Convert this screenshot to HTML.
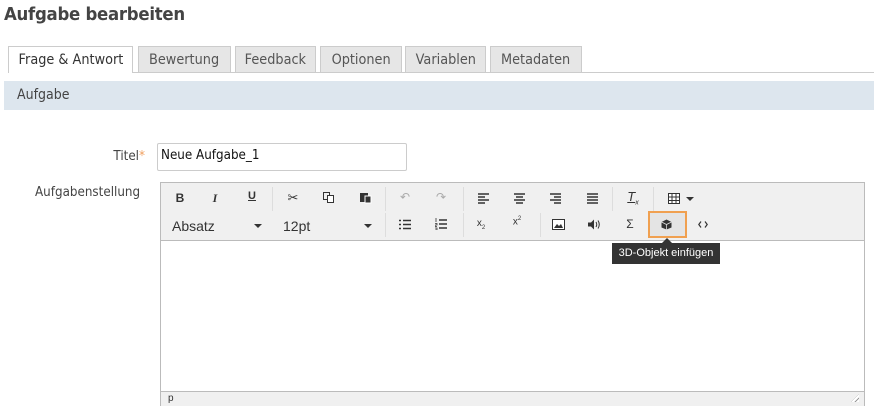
<!DOCTYPE html>
<html><head><meta charset="utf-8"><style>
body{margin:0;width:874px;height:416px;background:#fff;font-family:"DejaVu Sans","Liberation Sans",sans-serif;position:relative;overflow:hidden;color:#333}
.a{position:absolute}
h1{position:absolute;left:4px;top:4px;margin:0;font-size:18px;font-weight:bold;color:#444;font-family:"DejaVu Sans",sans-serif;letter-spacing:-0.3px;transform:scaleX(.92);transform-origin:left}
.tab{position:absolute;top:46px;height:26px;background:#e6e6e6;border:1px solid #ccc;border-bottom:none;font-size:14px;color:#555;text-align:center;line-height:26px;box-sizing:border-box}
.tab span{display:inline-block;transform:scaleX(.92)}
.ic{position:absolute;font-family:"Liberation Sans",sans-serif;color:#333;font-size:12px;transform:translate(-50%,0)}
.sep{position:absolute;width:1px;height:24px;background:#ddd}
svg.i{position:absolute}
</style></head><body>
<h1>Aufgabe bearbeiten</h1>
<div class="a" style="left:8px;top:72px;width:866px;height:1px;background:#ccc"></div>
<div class="tab" style="left:8px;width:125px;height:27px;background:#fff;color:#333"><span>Frage &amp; Antwort</span></div>
<div class="tab" style="left:138px;width:93px"><span>Bewertung</span></div>
<div class="tab" style="left:235px;width:81px"><span>Feedback</span></div>
<div class="tab" style="left:320px;width:82px"><span>Optionen</span></div>
<div class="tab" style="left:405px;width:81px"><span>Variablen</span></div>
<div class="tab" style="left:490px;width:92px"><span>Metadaten</span></div>
<div class="a" style="left:4px;top:81px;width:870px;height:29px;background:#dde6ee"></div>
<div class="a" style="left:17px;top:87px;font-size:14px;color:#444;transform:scaleX(.9);transform-origin:left">Aufgabe</div>
<div class="a" style="left:60px;top:149px;width:85px;text-align:right;font-size:13px;color:#444;transform:scaleX(.92);transform-origin:right">Titel<span style="color:#f0a060">*</span></div>
<div class="a" style="left:157px;top:143px;width:250px;height:28px;border:1px solid #ccc;border-radius:2px;box-sizing:border-box"></div>
<div class="a" style="left:161px;top:148px;font-size:13px;color:#111;transform:scaleX(.92);transform-origin:left">Neue Aufgabe_1</div>
<div class="a" style="left:35px;top:185px;font-size:13px;color:#444;transform:scaleX(.92);transform-origin:left">Aufgabenstellung</div>
<div class="a" style="left:160px;top:182px;width:705px;height:224px;border:1px solid #bbb;box-sizing:border-box;background:#fff"></div>
<div class="a" style="left:161px;top:183px;width:703px;height:57px;background:#f0f0f0;border-bottom:1px solid #bbb"></div>
<div class="a" style="left:161px;top:391px;width:703px;height:14px;background:#f0f0f0;border-top:1px solid #bbb"></div>
<div class="a" style="left:168px;top:393px;font-size:10px;font-family:'Liberation Sans',sans-serif">p</div>
<div class="a" style="left:851px;top:394px;width:8px;height:8px;background:repeating-linear-gradient(135deg,#fff 0 2px,#999 2px 3px);clip-path:polygon(100% 0,100% 100%,0 100%)"></div>
<!-- row1 -->
<div class="ic" style="left:180px;top:191px;font-weight:bold">B</div>
<div class="ic" style="left:215px;top:191px;font-weight:bold;font-style:italic;font-family:'Liberation Serif',serif">I</div>
<div class="ic" style="left:252px;top:190px;font-weight:bold;text-decoration:underline;font-size:11px">U</div>
<div class="sep" style="left:272px;top:187px"></div>
<div class="ic" style="left:293px;top:190px;font-size:13px">✂</div>
<svg class="i" style="left:323px;top:192px" width="12" height="12"><rect x="0.5" y="0.5" width="6" height="7" fill="none" stroke="#333"/><rect x="4.5" y="3.5" width="6" height="7" fill="#fff" stroke="#333"/></svg>
<svg class="i" style="left:360px;top:192px" width="12" height="12"><rect x="0" y="1" width="8" height="9" fill="#333"/><rect x="5" y="4" width="6" height="7" fill="#333" stroke="#fff"/></svg>
<div class="sep" style="left:385px;top:187px"></div>
<div class="ic" style="left:405px;top:190px;color:#aaa">↶</div>
<div class="ic" style="left:441px;top:190px;color:#aaa">↷</div>
<div class="sep" style="left:463px;top:187px"></div>
<svg class="i" style="left:478px;top:193px" width="11" height="11"><path d="M0 1h11M0 4h7M0 7h11M0 10h7" stroke="#333" stroke-width="1.5"/></svg>
<svg class="i" style="left:514px;top:193px" width="11" height="11"><path d="M0 1h11M2 4h7M0 7h11M2 10h7" stroke="#333" stroke-width="1.5"/></svg>
<svg class="i" style="left:550px;top:193px" width="11" height="11"><path d="M0 1h11M4 4h7M0 7h11M4 10h7" stroke="#333" stroke-width="1.5"/></svg>
<svg class="i" style="left:587px;top:193px" width="11" height="11"><path d="M0 1h11M0 4h11M0 7h11M0 10h11" stroke="#333" stroke-width="1.5"/></svg>
<div class="sep" style="left:612px;top:187px"></div>
<div class="ic" style="left:633px;top:189px;font-style:italic;text-decoration:underline;font-size:13px">T<sub style="font-size:7px">x</sub></div>
<div class="sep" style="left:653px;top:187px"></div>
<svg class="i" style="left:668px;top:193px" width="12" height="11"><rect x="0.5" y="0.5" width="11" height="10" fill="#fff" stroke="#333"/><path d="M0 4h12M0 7.5h12M4 0v11M8 0v11" stroke="#333"/></svg>
<div class="a" style="left:686px;top:197px;border:4px solid transparent;border-top-color:#333;border-bottom:none"></div>
<!-- row2 -->
<div class="a" style="left:172px;top:218px;font-size:14px;font-family:'Liberation Sans',sans-serif">Absatz</div>
<div class="a" style="left:254px;top:224px;border:4px solid transparent;border-top-color:#333;border-bottom:none"></div>
<div class="a" style="left:283px;top:218px;font-size:14px;font-family:'Liberation Sans',sans-serif">12pt</div>
<div class="a" style="left:364px;top:224px;border:4px solid transparent;border-top-color:#333;border-bottom:none"></div>
<div class="sep" style="left:385px;top:213px"></div>
<svg class="i" style="left:399px;top:219px" width="12" height="11"><path d="M0 1.5h2M0 5.5h2M0 9.5h2M4 1.5h8M4 5.5h8M4 9.5h8" stroke="#333" stroke-width="1.6"/></svg>
<svg class="i" style="left:435px;top:218px" width="12" height="12"><path d="M4 2h8M4 6h8M4 10h8" stroke="#333" stroke-width="1.5"/><path d="M1 0v4M0 5.5h2v1.5h-2v1.5h2M0 10h2v2h-2" stroke="#333" stroke-width=".8" fill="none"/></svg>
<div class="sep" style="left:463px;top:213px"></div>
<div class="ic" style="left:481px;top:218px;font-size:10px">x<sub style="font-size:6px">2</sub></div>
<div class="ic" style="left:517px;top:216px;font-size:10px">x<sup style="font-size:6px">2</sup></div>
<div class="sep" style="left:540px;top:213px"></div>
<svg class="i" style="left:552px;top:219px" width="13" height="11"><rect x="0.5" y="0.5" width="12" height="10" fill="#fff" stroke="#333"/><path d="M2 9l3-4 2 2 2-2 2 4z" fill="#333"/></svg>
<svg class="i" style="left:588px;top:219px" width="12" height="11"><path d="M0 3.5h3l3-3v10l-3-3h-3z" fill="#333"/><path d="M8 3q1.5 2.5 0 5M10 1.5q2.5 4 0 8" stroke="#333" fill="none"/></svg>
<div class="ic" style="left:630px;top:217px;font-size:12px">Σ</div>
<div class="a" style="left:648px;top:211px;width:39px;height:27px;border:2px solid #f0a050;background:#e4e4e4;box-sizing:border-box"></div>
<svg class="a" style="left:661px;top:219px" width="11" height="11" viewBox="0 0 11 11"><path d="M5.5 0.5L10.5 3V8.5L5.5 10.5L0.5 8.5V3Z" fill="#333"/><path d="M0.5 3L5.5 5.5L10.5 3M5.5 5.5V10.5" stroke="#ddd" stroke-width=".8" fill="none"/></svg>
<svg class="i" style="left:698px;top:221px" width="10" height="7"><path d="M3 0.5L0.8 3.5L3 6.5M7 0.5L9.2 3.5L7 6.5" stroke="#333" stroke-width="1.2" fill="none"/></svg>
<!-- tooltip -->
<div class="a" style="left:662px;top:238px;width:0;height:0;border:5px solid transparent;border-bottom-color:#333;border-top:none"></div>
<div class="a" style="left:612px;top:243px;width:108px;height:21px;background:#333;color:#fff;font-size:11px;font-family:'Liberation Sans',sans-serif;text-align:center;line-height:21px">3D-Objekt einfügen</div>
</body></html>
